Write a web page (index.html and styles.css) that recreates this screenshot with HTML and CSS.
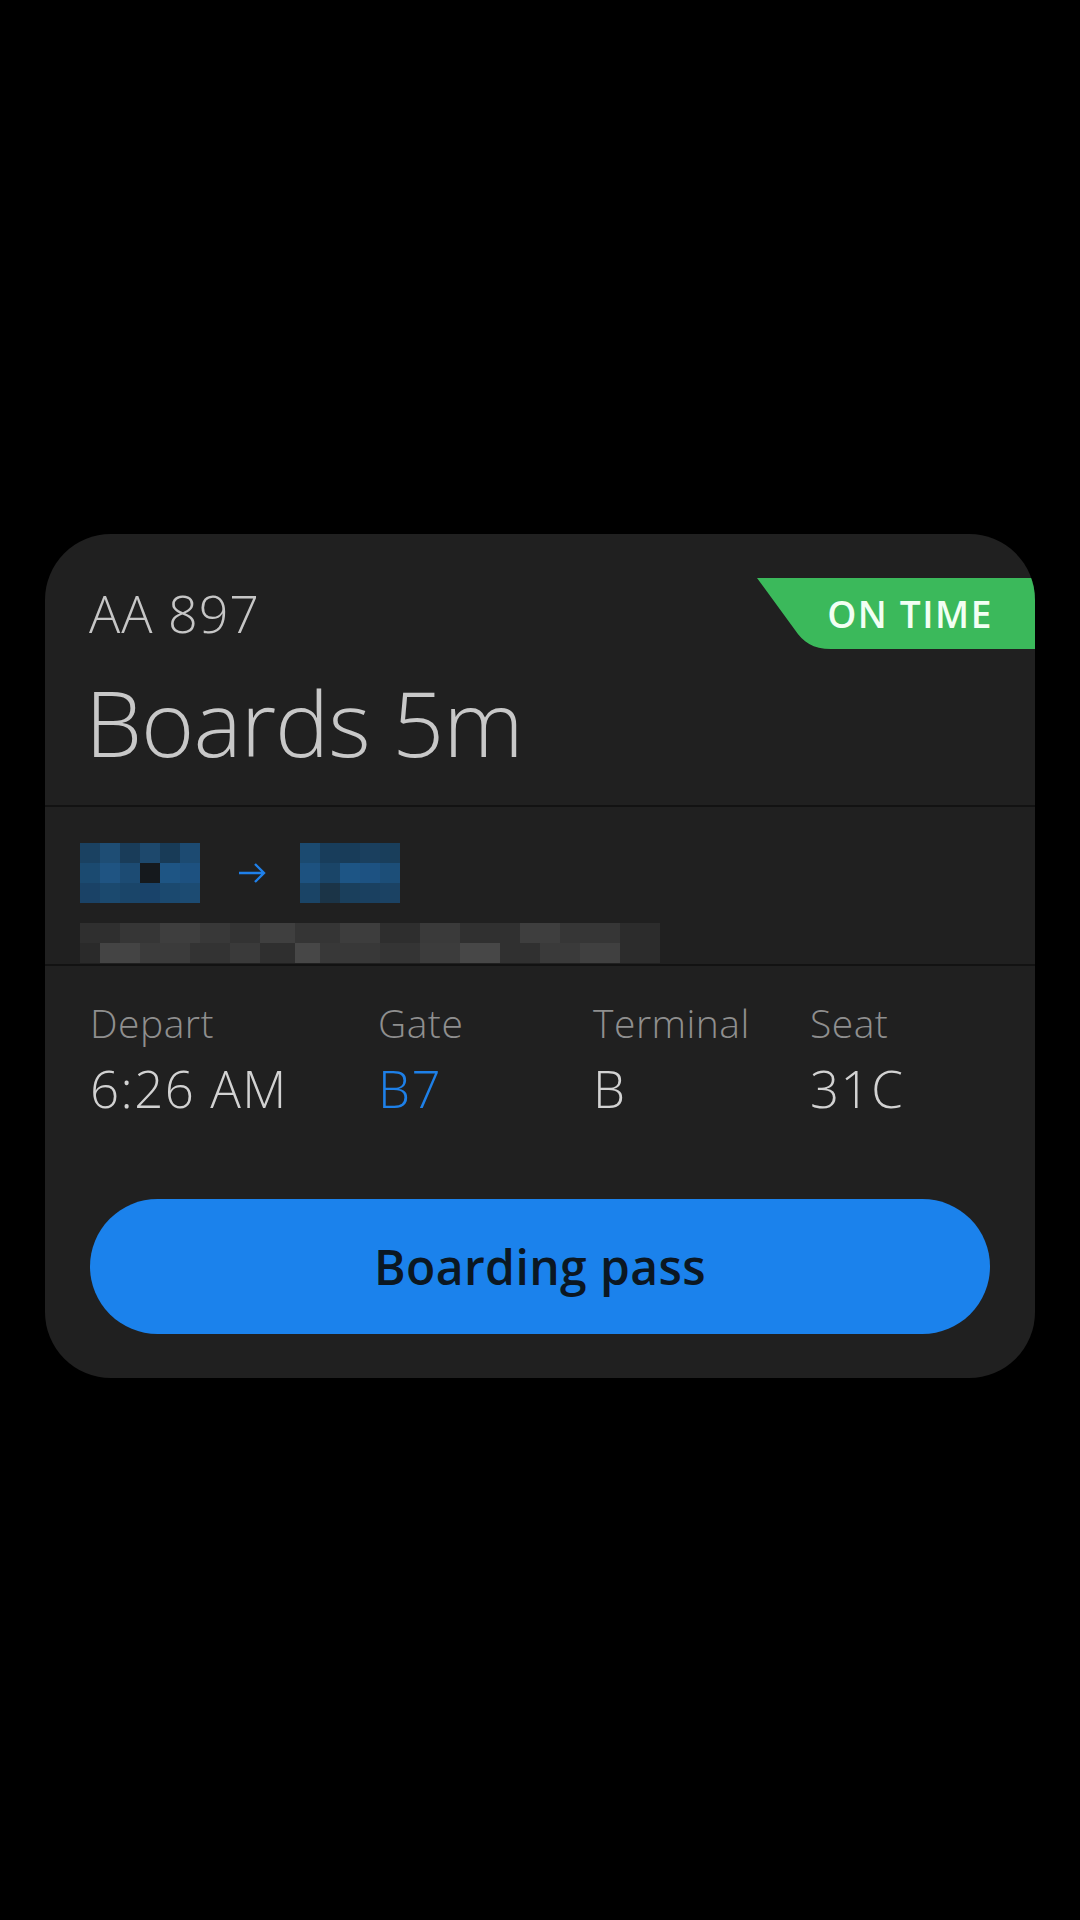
FILE: index.html
```html
<!DOCTYPE html>
<html lang="en">
<head>
    <meta charset="UTF-8">
    <meta name="viewport" content="width=device-width, initial-scale=1.0">
    <title>Flight Card</title>
    <link rel="stylesheet" href="styles.css">
</head>
<body>

<div class="card">
    <div class="status">
        <svg class="status-shape" viewBox="0 0 278 71" preserveAspectRatio="none">
            <path d="M0 0 H278 V71 H74 C56 71 46 64 38 52 Z" fill="#3bb95b"/>
        </svg>
        <span class="status-text">ON TIME</span>
    </div>

    <div class="head">
        <div class="flight">AA 897</div>
        <div class="boards">Boards 5m</div>
    </div>

    <div class="route">
        <div class="route-line">
            <div class="mosaic city-from">
                <div class="row r1"></div>
                <div class="row r2"></div>
                <div class="row r3"></div>
            </div>
            <svg class="arrow" viewBox="0 0 28 22">
                <path d="M1 11 H26 M17 2 L26 11 L17 20" fill="none" stroke="#1f80ea" stroke-width="2.4"/>
            </svg>
            <div class="mosaic city-to">
                <div class="row r1"></div>
                <div class="row r2"></div>
                <div class="row r3"></div>
            </div>
        </div>
        <div class="mosaic route-date">
            <div class="row r1"></div>
            <div class="row r2"></div>
        </div>
    </div>

    <div class="details">
        <div class="info">
            <div class="info-item">
                <span class="label">Depart</span>
                <span class="value">6:26 AM</span>
            </div>
            <div class="info-item">
                <span class="label">Gate</span>
                <span class="value gate">B7</span>
            </div>
            <div class="info-item">
                <span class="label">Terminal</span>
                <span class="value">B</span>
            </div>
            <div class="info-item">
                <span class="label">Seat</span>
                <span class="value">31C</span>
            </div>
        </div>

        <button class="pass-btn">Boarding pass</button>
    </div>
</div>

</body>
</html>
```

FILE: styles.css
```css
* {
    box-sizing: border-box;
}
body {
    margin: 0;
    min-height: 1920px;
    background: #000;
    font-family: "Open Sans", "Noto Sans", sans-serif;
    padding-top: 534px;
}
.card {
    position: relative;
    width: 990px;
    margin: 0 auto;
    background: #202020;
    border-radius: 66px;
    overflow: hidden;
}

/* status badge */
.status {
    position: absolute;
    top: 44px;
    right: 0;
    width: 278px;
    height: 71px;
    display: flex;
    align-items: center;
    justify-content: flex-end;
    padding-right: 42px;
}
.status-shape {
    position: absolute;
    left: 0;
    top: 0;
    width: 100%;
    height: 100%;
}
.status-text {
    position: relative;
    color: #f2fff3;
    font-size: 37px;
    font-weight: 600;
    letter-spacing: 1.6px;
    line-height: 1;
}

/* header */
.head {
    height: 273px;
    padding: 53px 44px 0;
    border-bottom: 2px solid #121212;
}
.flight {
    font-size: 52px;
    line-height: 52px;
    font-weight: 300;
    letter-spacing: 1px;
    color: #c6c6c6;
}
.boards {
    margin-top: 38px;
    margin-left: -4px;
    font-size: 91px;
    line-height: 91px;
    font-weight: 300;
    letter-spacing: -1px;
    color: #c8c8c8;
}

/* route (redacted) */
.route {
    height: 159px;
    padding: 36px 0 0 35px;
    border-bottom: 2px solid #121212;
}
.route-line {
    display: flex;
    align-items: center;
}
.mosaic .row {
    height: 20px;
}
.city-from {
    width: 120px;
}
.city-from .r1 {
    background: linear-gradient(90deg, #1a4161 0 20px, #1e4d74 20px 40px, #193c59 40px 60px, #1d486c 60px 80px, #183b57 80px 100px, #1c4a71 100px);
}
.city-from .r2 {
    background: linear-gradient(90deg, #1b4a70 0 20px, #1f5482 20px 40px, #1c4b73 40px 60px, #15191d 60px 80px, #1e5584 80px 100px, #1d5180 100px);
}
.city-from .r3 {
    background: linear-gradient(90deg, #1a4266 0 20px, #1b496e 20px 40px, #1a4569 40px 60px, #19436a 60px 80px, #1b496f 80px 100px, #1c4b72 100px);
}
.arrow {
    width: 28px;
    height: 22px;
    margin: 0 34px 0 38px;
}
.city-to {
    width: 100px;
}
.city-to .r1 {
    background: linear-gradient(90deg, #1b4a70 0 20px, #183d5b 20px 40px, #183c59 40px 60px, #1a3f5e 60px 80px, #193e5b 80px);
}
.city-to .r2 {
    background: linear-gradient(90deg, #1d5280 0 20px, #1a4568 20px 40px, #1d5585 40px 60px, #1d5282 60px 80px, #1c4e78 80px);
}
.city-to .r3 {
    background: linear-gradient(90deg, #1a4466 0 20px, #1b3447 20px 40px, #1a3f5c 40px 60px, #1a4060 60px 80px, #1b4263 80px);
}
.route-date {
    width: 580px;
    margin-top: 20px;
}
.route-date .r1 {
    background: linear-gradient(90deg, #2f2f2f 0 40px, #363636 40px 80px, #3e3e3e 80px 120px, #383838 120px 150px, #333 150px 180px, #3f3f3f 180px 215px, #353535 215px 260px, #3d3d3d 260px 300px, #2e2e2e 300px 340px, #3a3a3a 340px 380px, #303030 380px 440px, #3e3e3e 440px 480px, #363636 480px 540px, #2c2c2c 540px);
}
.route-date .r2 {
    background: linear-gradient(90deg, #2a2a2a 0 20px, #444 20px 60px, #3b3b3b 60px 110px, #333 110px 150px, #3a3a3a 150px 180px, #2f2f2f 180px 215px, #474747 215px 240px, #383838 240px 300px, #343434 300px 340px, #3c3c3c 340px 380px, #474747 380px 420px, #303030 420px 460px, #3a3a3a 460px 500px, #404040 500px 540px, #2c2c2c 540px);
}

/* details */
.details {
    padding: 37px 45px 44px 45px;
}
.info {
    display: grid;
    grid-template-columns: 288px 215px 217px 1fr;
}
.info-item {
    display: flex;
    flex-direction: column;
}
.label {
    font-size: 39px;
    line-height: 39px;
    font-weight: 300;
    letter-spacing: 0.5px;
    color: #8f8f8f;
}
.value {
    margin-top: 21px;
    font-size: 51px;
    line-height: 51px;
    font-weight: 300;
    letter-spacing: 1.5px;
    color: #d2d2d2;
}
.value.gate {
    color: #1e80e8;
}
.pass-btn {
    display: flex;
    align-items: center;
    justify-content: center;
    width: 100%;
    height: 135px;
    margin-top: 85px;
    border: none;
    border-radius: 68px;
    background: #1b82ec;
    color: #0b1722;
    font-family: "Open Sans", "Noto Sans", sans-serif;
    font-size: 48px;
    font-weight: 600;
    letter-spacing: 0.4px;
    line-height: 49px;
}
```
